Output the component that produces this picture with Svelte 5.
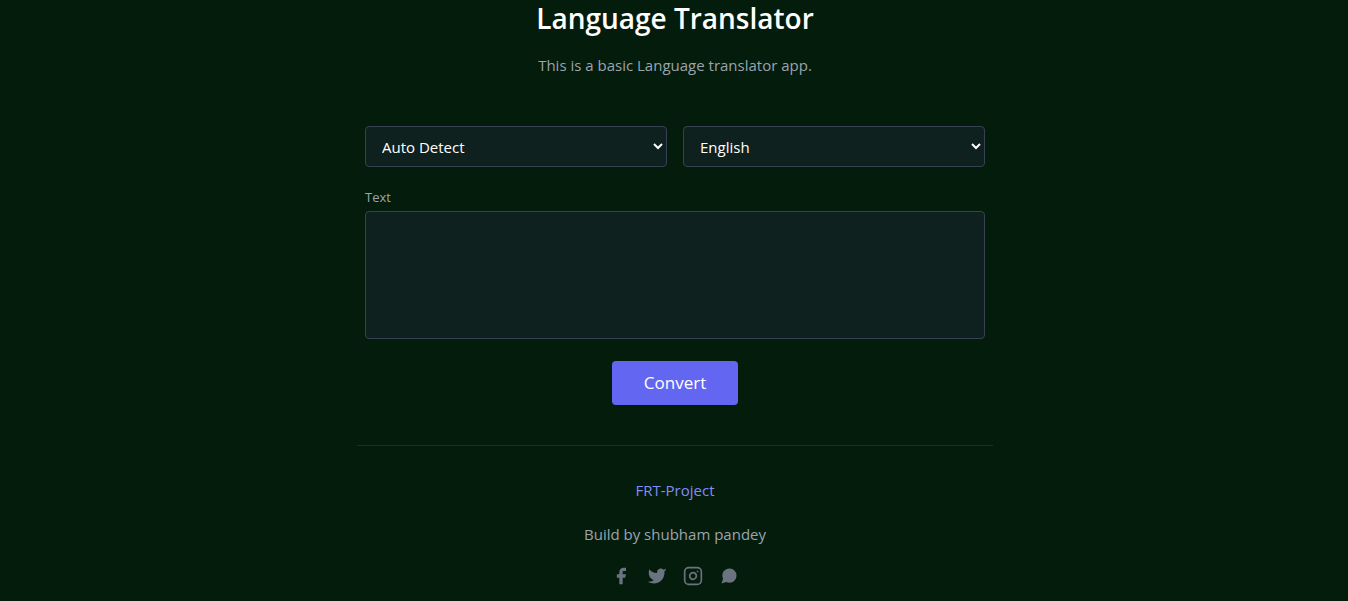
<script>
  const languages = ['English', 'Hindi', 'French', 'German', 'Spanish'];
  let source = $state('Auto Detect');
  let target = $state('English');
  let text = $state('');
</script>

<div class="page">
  <main>
    <header>
      <h1>Language Translator</h1>
      <p>This is a basic Language translator app.</p>
    </header>

    <form onsubmit={(event) => event.preventDefault()}>
      <div class="languages">
        <select aria-label="Source language" bind:value={source}>
          <option>Auto Detect</option>
          {#each languages as language}
            <option>{language}</option>
          {/each}
        </select>
        <select aria-label="Target language" bind:value={target}>
          {#each languages as language}
            <option>{language}</option>
          {/each}
        </select>
      </div>
      <div class="field">
        <label for="text">Text</label>
        <textarea id="text" bind:value={text}></textarea>
      </div>
      <button type="submit">Convert</button>
    </form>

    <footer>
      <a class="project" href="#project">FRT-Project</a>
      <p>Build by shubham pandey</p>
      <nav aria-label="Social links">
        <a href="#facebook" aria-label="Facebook">
          <svg viewBox="0 0 24 24" fill="currentColor"><path d="M18 2h-3a5 5 0 00-5 5v3H7v4h3v8h4v-8h3l1-4h-4V7a1 1 0 011-1h3z" /></svg>
        </a>
        <a href="#twitter" aria-label="Twitter">
          <svg viewBox="0 0 24 24" fill="currentColor"><path d="M23 3a10.9 10.9 0 01-3.14 1.53 4.48 4.48 0 00-7.86 3v1A10.66 10.66 0 013 4s-4 9 5 13a11.64 11.64 0 01-7 2c9 5 20 0 20-11.5a4.5 4.5 0 00-.08-.83A7.72 7.72 0 0023 3z" /></svg>
        </a>
        <a href="#instagram" aria-label="Instagram">
          <svg viewBox="0 0 24 24" fill="none" stroke="currentColor" stroke-width="2" stroke-linecap="round" stroke-linejoin="round"><rect width="20" height="20" x="2" y="2" rx="5" /><path d="M16 11.37A4 4 0 1112.63 8 4 4 0 0116 11.37zm1.5-4.87h.01" /></svg>
        </a>
        <a href="#chat" aria-label="Chat">
          <svg viewBox="0 0 24 24" fill="currentColor"><path d="M21 11.5a8.38 8.38 0 01-.9 3.8 8.5 8.5 0 01-7.6 4.7 8.38 8.38 0 01-3.8-.9L3 21l1.9-5.7a8.38 8.38 0 01-.9-3.8 8.5 8.5 0 014.7-7.6 8.38 8.38 0 013.8-.9h.5a8.48 8.48 0 018 8v.5z" /></svg>
        </a>
      </nav>
    </footer>
  </main>
</div>

<style>
  :global(body) {
    background: #041c0b;
  }

  .page {
    padding: 0 20px 15px 22px;
  }

  main {
    max-width: 636px;
    margin: 0 auto;
    color: #9ca3af;
    font: 15px/24px "Segoe UI", "Open Sans", "Noto Sans", sans-serif;
  }

  header {
    margin-bottom: 48px;
    text-align: center;
  }

  h1 {
    margin: 0 0 16px;
    color: #fff;
    font-size: 28px;
    font-weight: 600;
    line-height: 36px;
  }

  header p {
    margin: 0;
    line-height: 26px;
  }

  form {
    display: flex;
    flex-direction: column;
    align-items: center;
    padding: 0 8px;
  }

  .languages {
    display: grid;
    grid-template-columns: 1fr 1fr;
    gap: 16px;
    width: 100%;
    margin-bottom: 16px;
  }

  select,
  textarea {
    box-sizing: border-box;
    width: 100%;
    border: 1px solid #374151;
    border-radius: 4px;
    background: #0f211e;
    color: #f3f4f6;
    font: inherit;
  }

  select {
    height: 41px;
    padding: 0 0 0 12px;
    color: #fff;
  }

  .field {
    width: 100%;
    margin-bottom: 22px;
  }

  label {
    display: block;
    font-size: 13px;
    line-height: 28px;
  }

  textarea {
    display: block;
    height: 128px;
    padding: 4px 12px;
    resize: none;
  }

  button {
    padding: 8px 32px;
    border: 0;
    border-radius: 4px;
    background: #6366f1;
    color: #fff;
    font: inherit;
    font-size: 17px;
    line-height: 28px;
  }

  footer {
    display: flex;
    flex-direction: column;
    align-items: center;
    margin-top: 40px;
    padding-top: 32px;
    border-top: 1px solid #1f2937;
  }

  footer p {
    margin: 20px 0;
  }

  .project {
    color: #818cf8;
    text-decoration: none;
  }

  nav {
    display: flex;
    gap: 16px;
  }

  nav a {
    color: #6b7280;
  }

  svg {
    display: block;
    width: 20px;
    height: 20px;
  }
</style>
